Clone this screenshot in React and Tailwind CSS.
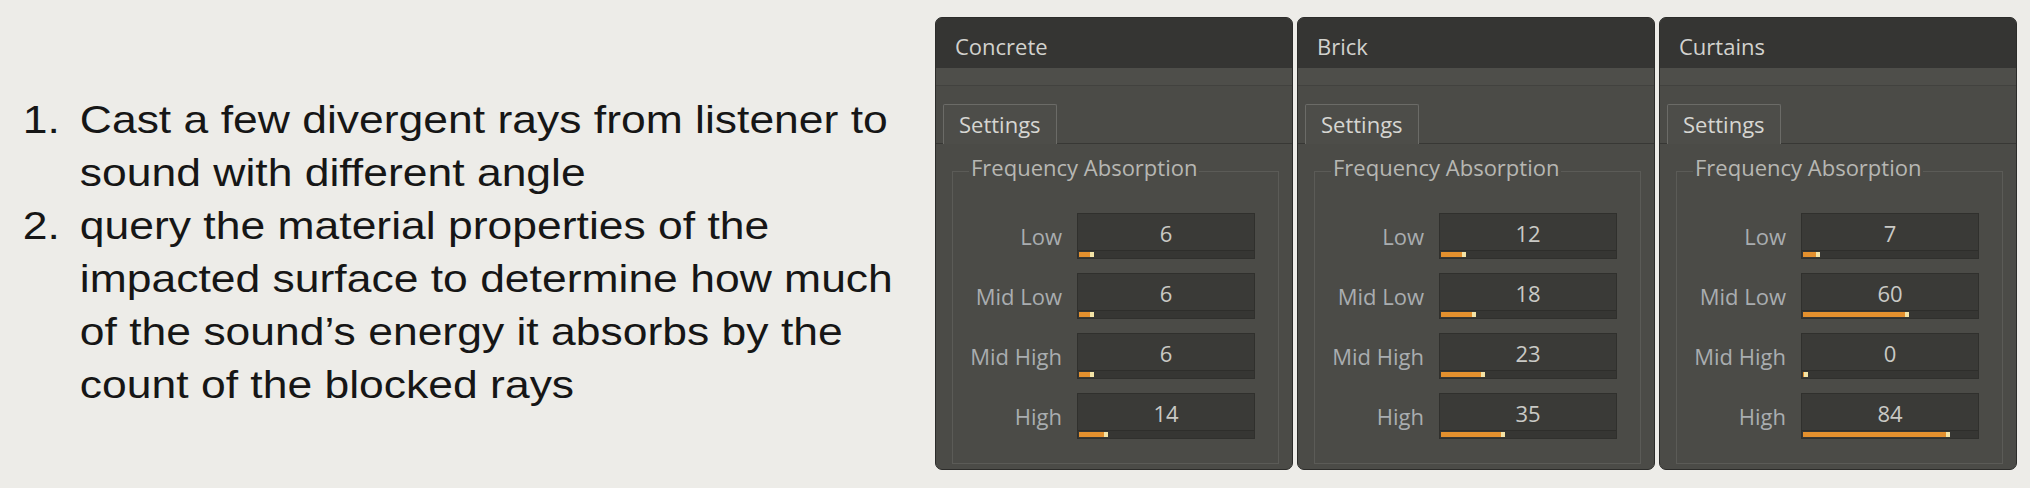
import React from "react";

const panels = [
  { name: "Concrete", values: [6, 6, 6, 14] },
  { name: "Brick", values: [12, 18, 23, 35] },
  { name: "Curtains", values: [7, 60, 0, 84] },
];
const labels = ["Low", "Mid Low", "Mid High", "High"];

function Row({ label, value }) {
  return (
    <div className="flex items-center gap-[15px]">
      <div className="w-[109px] text-right text-[22px] leading-[30px] text-[#a9adb0]">{label}</div>
      <div className="flex h-[46px] w-[178px] flex-col border border-[#30302d] bg-[#3a3a37]">
        <div className="h-[36px] pt-[4px] text-center text-[22px] leading-[30px] text-[#c9c9c5]">{value}</div>
        <div className="h-px bg-[#2e2e2b]" />
        <div className="flex flex-1 items-center bg-[#363633] px-[1px]">
          <div
            className="flex h-[5px] justify-end bg-[#e3902e]"
            style={{ width: `calc(5px + (100% - 5px) * ${value / 100})` }}
          >
            <div className="h-full w-[4px] bg-[#f3e3a6]" />
          </div>
        </div>
      </div>
    </div>
  );
}

function Panel({ name, values }) {
  return (
    <div className="flex h-[453px] w-[358px] shrink-0 flex-col overflow-hidden rounded-[7px] border border-[#2c2c2a] bg-[#4b4b47] font-['Open_Sans',sans-serif]">
      <div className="h-[50px] bg-[#353533] pl-[19px] pt-[13px] text-[22px] leading-[30px] text-[#d2d2ce]">
        {name}
      </div>
      <div className="h-[18px] border-b border-[#42423f] bg-[#4e4e4a]" />
      <div className="flex h-[58px] items-end border-b border-[#383835] pl-[7px]">
        <div className="-mb-px h-[40px] rounded-t-[2px] border border-b-0 border-[#6b6b67] bg-[#4d4d49] px-[15px] pt-[4px] text-[22px] leading-[30px] text-[#d6d6d2]">
          Settings
        </div>
      </div>
      <div className="pl-[16px] pt-[8px]">
        <fieldset className="w-[327px] border border-[#5b5b57] pb-[24px]">
          <legend className="ml-[16px] px-[2px] pb-[9px] text-[22px] leading-[30px] text-[#b7b7b3]">
            Frequency Absorption
          </legend>
          <div className="mt-[22px] flex flex-col gap-[14px]">
            {labels.map((l, i) => (
              <Row key={l} label={l} value={values[i]} />
            ))}
          </div>
        </fieldset>
      </div>
    </div>
  );
}

export default function App() {
  return (
    <div className="flex h-[488px] w-[2030px] overflow-hidden bg-[#edece8]">
      <div className="w-[935px] shrink-0">
        <div className="origin-top-left scale-x-[1.14] pl-[20px] pt-[93px] font-['Liberation_Sans',Arial,sans-serif] text-[39px] leading-[53px] text-[#161616]">
          <div className="grid grid-cols-[50px_1fr]">
            <div>1.</div>
            <div>
              Cast a few divergent rays from listener to
              <br />
              sound with different angle
            </div>
            <div>2.</div>
            <div>
              query the material properties of the
              <br />
              impacted surface to determine how much
              <br />
              of the sound’s energy it absorbs by the
              <br />
              count of the blocked rays
            </div>
          </div>
        </div>
      </div>
      <div className="flex gap-[4px] pt-[17px]">
        {panels.map((p) => (
          <Panel key={p.name} name={p.name} values={p.values} />
        ))}
      </div>
    </div>
  );
}
